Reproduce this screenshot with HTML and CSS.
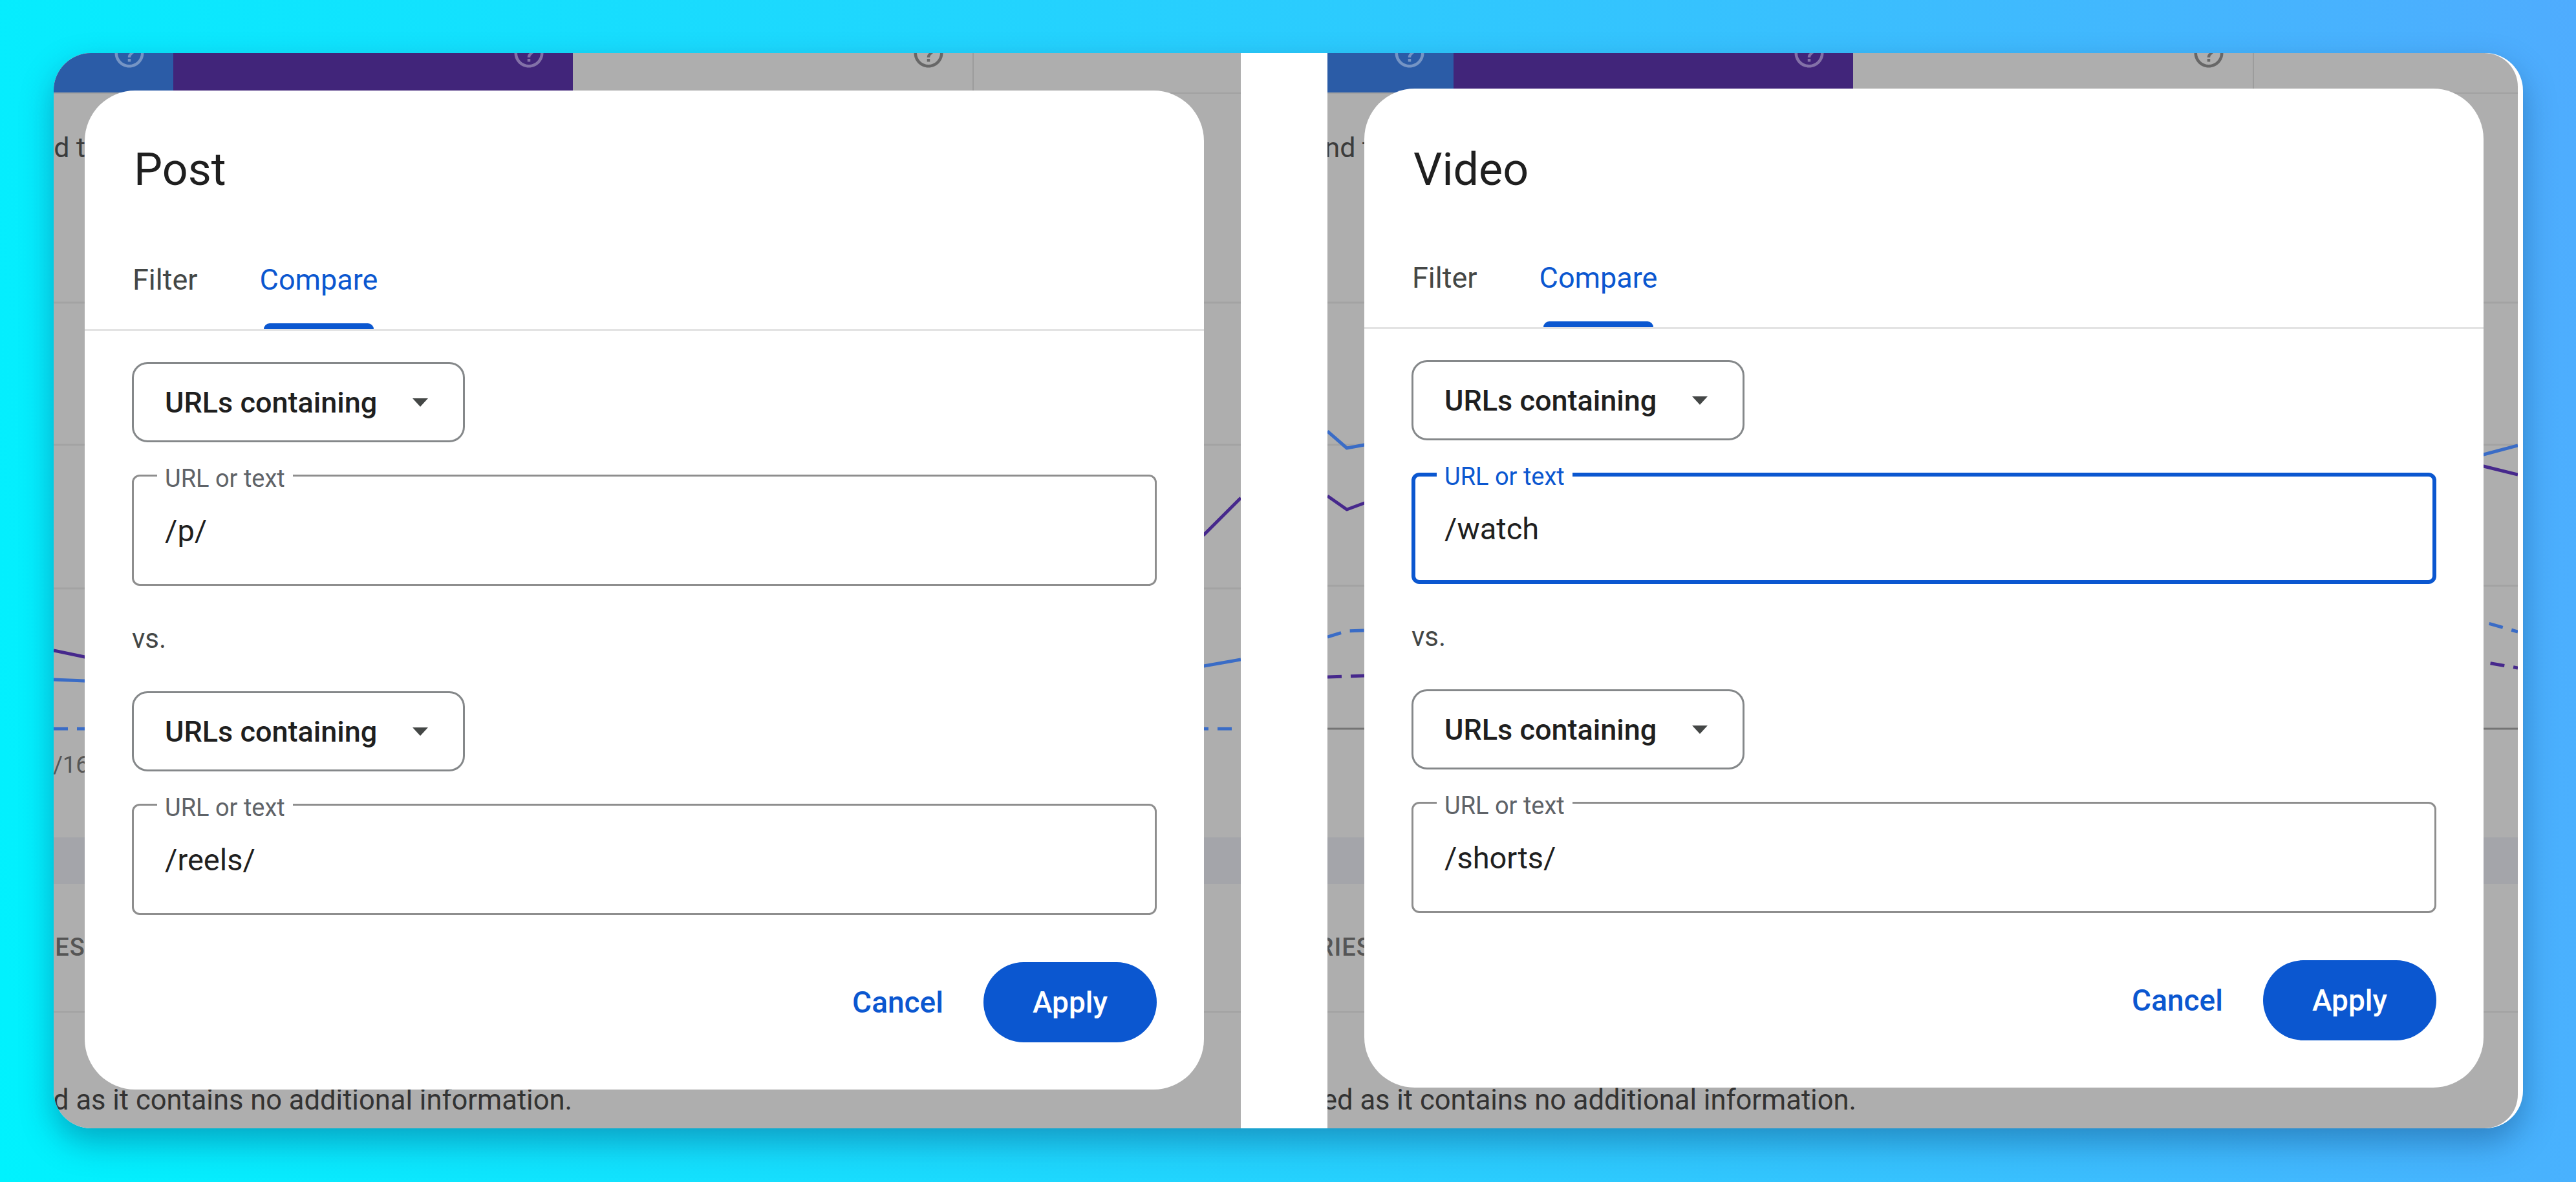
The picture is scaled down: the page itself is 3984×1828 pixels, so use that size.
FILE: index.html
```html
<!DOCTYPE html>
<html lang="en">
<head>
    <meta charset="UTF-8">
    <meta name="viewport" content="width=device-width, initial-scale=1.0">
    <title>Compare URLs</title>
    <link rel="stylesheet" href="styles.css">
</head>
<body>
    <div class="frame">

        <!-- Post pages vs reels -->
        <div class="shot shot-post">
            <div class="page">
                <div class="page-head">
                    <div class="metric metric-clicks">
                        <svg class="help" viewBox="0 0 24 24"><path d="M11 18h2v-2h-2v2zm1-16C6.48 2 2 6.48 2 12s4.48 10 10 10 10-4.48 10-10S17.52 2 12 2zm0 18c-4.41 0-8-3.59-8-8s3.59-8 8-8 8 3.59 8 8-3.59 8-8 8zm0-14c-2.21 0-4 1.79-4 4h2c0-1.1.9-2 2-2s2 .9 2 2c0 2-3 1.75-3 5h2c0-2.25 3-2.5 3-5 0-2.21-1.79-4-4-4z"/></svg>
                    </div>
                    <div class="metric metric-impressions">
                        <svg class="help" viewBox="0 0 24 24"><path d="M11 18h2v-2h-2v2zm1-16C6.48 2 2 6.48 2 12s4.48 10 10 10 10-4.48 10-10S17.52 2 12 2zm0 18c-4.41 0-8-3.59-8-8s3.59-8 8-8 8 3.59 8 8-3.59 8-8 8zm0-14c-2.21 0-4 1.79-4 4h2c0-1.1.9-2 2-2s2 .9 2 2c0 2-3 1.75-3 5h2c0-2.25 3-2.5 3-5 0-2.21-1.79-4-4-4z"/></svg>
                    </div>
                    <div class="metric">
                        <svg class="help" viewBox="0 0 24 24"><path d="M11 18h2v-2h-2v2zm1-16C6.48 2 2 6.48 2 12s4.48 10 10 10 10-4.48 10-10S17.52 2 12 2zm0 18c-4.41 0-8-3.59-8-8s3.59-8 8-8 8 3.59 8 8-3.59 8-8 8zm0-14c-2.21 0-4 1.79-4 4h2c0-1.1.9-2 2-2s2 .9 2 2c0 2-3 1.75-3 5h2c0-2.25 3-2.5 3-5 0-2.21-1.79-4-4-4z"/></svg>
                    </div>
                    <div class="metric metric-split"></div>
                </div>
                <p class="page-note"><span>and the</span></p>
                <svg class="chart" width="1836" height="830" viewBox="0 0 1836 830">
                    <g class="grid">
                        <line x1="0" y1="163" x2="1836" y2="163"/>
                        <line x1="0" y1="383" x2="1836" y2="383"/>
                        <line x1="0" y1="605" x2="1836" y2="605"/>
                    </g>
                    <polyline class="series-a" points="0,701 48,711 400,680 800,640 1200,600 1600,560 1779,522 1836,465"/>
                    <polyline class="series-b" points="0,746 48,748 500,700 1000,760 1500,735 1779,725 1836,715"/>
                    <polyline class="series-b dashed" points="0,822 1836,822"/>
                </svg>
                <div class="chart-axis"><span>4/16</span></div>
                <div class="page-band"></div>
                <div class="table-tabs"><span>QUERIES</span></div>
                <p class="page-foot"><span>This row is not displayed as it contains no additional information.</span></p>
            </div>

            <div class="dialog">
                <h2 class="dialog-title">Post</h2>
                <div class="dialog-tabs">
                    <div class="tab">Filter</div>
                    <div class="tab tab-active">Compare</div>
                </div>
                <div class="dialog-body">
                    <div class="select">URLs containing <span class="caret"></span></div>
                    <div class="field">
                        <span class="field-label">URL or text</span>
                        /p/
                    </div>
                    <div class="vs">vs.</div>
                    <div class="select">URLs containing <span class="caret"></span></div>
                    <div class="field">
                        <span class="field-label">URL or text</span>
                        /reels/
                    </div>
                    <div class="dialog-actions">
                        <button class="btn">Cancel</button>
                        <button class="btn btn-primary">Apply</button>
                    </div>
                </div>
            </div>
        </div>

        <!-- Video: watch vs shorts -->
        <div class="shot shot-video">
            <div class="page">
                <div class="page-head">
                    <div class="metric metric-clicks">
                        <svg class="help" viewBox="0 0 24 24"><path d="M11 18h2v-2h-2v2zm1-16C6.48 2 2 6.48 2 12s4.48 10 10 10 10-4.48 10-10S17.52 2 12 2zm0 18c-4.41 0-8-3.59-8-8s3.59-8 8-8 8 3.59 8 8-3.59 8-8 8zm0-14c-2.21 0-4 1.79-4 4h2c0-1.1.9-2 2-2s2 .9 2 2c0 2-3 1.75-3 5h2c0-2.25 3-2.5 3-5 0-2.21-1.79-4-4-4z"/></svg>
                    </div>
                    <div class="metric metric-impressions">
                        <svg class="help" viewBox="0 0 24 24"><path d="M11 18h2v-2h-2v2zm1-16C6.48 2 2 6.48 2 12s4.48 10 10 10 10-4.48 10-10S17.52 2 12 2zm0 18c-4.41 0-8-3.59-8-8s3.59-8 8-8 8 3.59 8 8-3.59 8-8 8zm0-14c-2.21 0-4 1.79-4 4h2c0-1.1.9-2 2-2s2 .9 2 2c0 2-3 1.75-3 5h2c0-2.25 3-2.5 3-5 0-2.21-1.79-4-4-4z"/></svg>
                    </div>
                    <div class="metric">
                        <svg class="help" viewBox="0 0 24 24"><path d="M11 18h2v-2h-2v2zm1-16C6.48 2 2 6.48 2 12s4.48 10 10 10 10-4.48 10-10S17.52 2 12 2zm0 18c-4.41 0-8-3.59-8-8s3.59-8 8-8 8 3.59 8 8-3.59 8-8 8zm0-14c-2.21 0-4 1.79-4 4h2c0-1.1.9-2 2-2s2 .9 2 2c0 2-3 1.75-3 5h2c0-2.25 3-2.5 3-5 0-2.21-1.79-4-4-4z"/></svg>
                    </div>
                    <div class="metric metric-split"></div>
                </div>
                <p class="page-note"><span>and the</span></p>
                <svg class="chart" width="1841" height="830" viewBox="0 0 1841 830">
                    <g class="grid">
                        <line x1="0" y1="163" x2="1841" y2="163"/>
                        <line x1="0" y1="383" x2="1841" y2="383"/>
                        <line x1="0" y1="601" x2="1841" y2="601"/>
                        <line class="axis" x1="0" y1="822" x2="1841" y2="822"/>
                    </g>
                    <polyline class="series-b" points="0,362 30,388 57,383 500,340 1000,420 1500,380 1788,398 1841,384"/>
                    <polyline class="series-a" points="0,462 30,483 57,473 500,450 1000,500 1500,440 1788,416 1841,429"/>
                    <polyline class="series-b dashed" points="0,680 30,671 57,670 600,690 1200,650 1788,657 1841,672"/>
                    <polyline class="series-a dashed" points="0,742 57,740 600,760 1200,730 1788,719 1841,728"/>
                </svg>
                <div class="chart-axis"></div>
                <div class="page-band"></div>
                <div class="table-tabs"><span>QUERIES</span></div>
                <p class="page-foot"><span>This row is not displayed as it contains no additional information.</span></p>
            </div>

            <div class="dialog">
                <h2 class="dialog-title">Video</h2>
                <div class="dialog-tabs">
                    <div class="tab">Filter</div>
                    <div class="tab tab-active">Compare</div>
                </div>
                <div class="dialog-body">
                    <div class="select">URLs containing <span class="caret"></span></div>
                    <div class="field field-focused">
                        <span class="field-label">URL or text</span>
                        /watch
                    </div>
                    <div class="vs">vs.</div>
                    <div class="select">URLs containing <span class="caret"></span></div>
                    <div class="field">
                        <span class="field-label">URL or text</span>
                        /shorts/
                    </div>
                    <div class="dialog-actions">
                        <button class="btn">Cancel</button>
                        <button class="btn btn-primary">Apply</button>
                    </div>
                </div>
            </div>
        </div>

    </div>
</body>
</html>
```

FILE: styles.css
```css
body {
    margin: 0;
    height: 1828px;
    padding: 82px 82px 0 83px;
    box-sizing: border-box;
    background: linear-gradient(80deg, #00f2fe, #4facfe);
    font-family: Roboto, "Liberation Sans", sans-serif;
}
.frame {
    display: flex;
    gap: 134px;
    width: 3819px;
    height: 1663px;
    padding-right: 8px;
    box-sizing: border-box;
    background: #fff;
    border-radius: 58px;
    overflow: hidden;
    box-shadow: 0 22px 50px rgba(0, 40, 90, 0.35);
}

/* screenshot of the page behind the modal */
.shot {
    position: relative;
    flex: none;
    height: 100%;
    background: #aeaeae;
    overflow: hidden;
}
.shot-post {
    width: 1836px;
}
.shot-video {
    width: 1841px;
    border-radius: 0 52px 52px 0;
}
.page {
    color: #3c3c3c;
}
.page-head {
    display: flex;
    height: 61px;
    margin-left: -433px;
    border-bottom: 2px solid #a2a2a2;
}
.shot-video .page-head {
    margin-left: -423px;
}
.metric {
    flex: none;
    width: 618px;
    display: flex;
    justify-content: flex-end;
    align-items: flex-start;
}
.metric-clicks {
    background: #2b5ca7;
}
.metric-impressions {
    background: #41257a;
}
.metric-split {
    border-left: 2px solid #9c9c9c;
}
.help {
    width: 54px;
    height: 54px;
    margin: -27px 41px 0 0;
    fill: #676767;
}
.metric-clicks .help,
.metric-impressions .help {
    fill: rgba(255, 255, 255, 0.35);
}
.page-note {
    height: 160px;
    margin: 0;
    padding-top: 58px;
    box-sizing: border-box;
    font-size: 43px;
    line-height: 50px;
    white-space: nowrap;
}
.page-note span {
    margin-left: -47px;
}
.shot-video .page-note span {
    margin-left: -28px;
}
.chart {
    display: block;
}
.grid line {
    stroke: #a3a3a3;
    stroke-width: 3;
}
.grid .axis {
    stroke: #747474;
}
.series-a,
.series-b {
    fill: none;
    stroke-width: 5;
    stroke-linejoin: round;
}
.series-a {
    stroke: #46288c;
}
.series-b {
    stroke: #3a6cc6;
}
.dashed {
    stroke-dasharray: 22 14;
}
.chart-axis {
    height: 160px;
    padding-top: 26px;
    box-sizing: border-box;
    font-size: 36px;
    line-height: 44px;
    color: #555;
}
.chart-axis span {
    margin-left: -21px;
}
.page-band {
    height: 72px;
    background: #a4a5aa;
}
.table-tabs {
    height: 197px;
    line-height: 197px;
    border-bottom: 2px solid #a2a2a2;
    font-size: 38px;
    font-weight: 500;
    letter-spacing: 1px;
    color: #555;
    white-space: nowrap;
}
.table-tabs span {
    margin-left: -110px;
}
.shot-video .table-tabs span {
    margin-left: -90px;
}
.page-foot {
    display: flex;
    justify-content: flex-end;
    width: 802px;
    margin: 0;
    padding-top: 111px;
    font-size: 43.5px;
    line-height: 50px;
    white-space: nowrap;
    color: #333;
}
.shot-video .page-foot {
    width: 818px;
}

/* compare dialog */
.dialog {
    position: absolute;
    left: 48px;
    top: 58px;
    width: 1731px;
    background: #fff;
    border-radius: 78px;
}
.shot-video .dialog {
    left: 57px;
    top: 55px;
}
.dialog-title {
    margin: 0;
    padding: 74px 76px 0;
    font-size: 70px;
    font-weight: 400;
    line-height: 96px;
    color: #1f1f1f;
}
.shot-video .dialog-title {
    padding-top: 77px;
}
.dialog-tabs {
    display: flex;
    margin-top: 55px;
    padding-left: 26px;
    border-bottom: 3px solid #e3e3e3;
}
.shot-video .dialog-tabs {
    margin-top: 52px;
}
.tab {
    position: relative;
    padding: 0 48px 8px;
    font-size: 45px;
    line-height: 136px;
    color: #444746;
}
.tab-active {
    color: #0b57d0;
}
.tab-active::after {
    content: "";
    position: absolute;
    left: 54px;
    right: 54px;
    bottom: 0;
    height: 9px;
    background: #0b57d0;
    border-radius: 9px 9px 0 0;
}
.dialog-body {
    padding: 48px 73px 73px;
}
.select {
    display: flex;
    align-items: center;
    justify-content: space-between;
    width: 515px;
    height: 124px;
    padding: 0 54px 0 48px;
    box-sizing: border-box;
    border: 3px solid #85888a;
    border-radius: 24px;
    font-size: 45px;
    font-weight: 500;
    color: #1f1f1f;
}
.caret {
    border-left: 12px solid transparent;
    border-right: 12px solid transparent;
    border-top: 13px solid #444746;
}
.field {
    position: relative;
    display: flex;
    align-items: center;
    height: 172px;
    margin-top: 50px;
    padding-left: 48px;
    box-sizing: border-box;
    border: 3px solid #8e8e8e;
    border-radius: 12px;
    font-size: 47px;
    color: #1f1f1f;
}
.field-label {
    position: absolute;
    left: 36px;
    top: -18px;
    padding: 0 12px;
    background: #fff;
    font-size: 38px;
    line-height: 42px;
    color: #5f6368;
}
.field-focused {
    border: 6px solid #0b57d0;
    padding-left: 45px;
}
.field-focused .field-label {
    left: 33px;
    top: -21px;
    color: #0b57d0;
}
.vs {
    margin: 57px 0 56px;
    font-size: 42px;
    line-height: 50px;
    color: #444746;
}
.dialog-actions {
    display: flex;
    justify-content: flex-end;
    align-items: center;
    gap: 26px;
    margin-top: 73px;
}
.btn {
    height: 124px;
    padding: 0 36px;
    border: none;
    border-radius: 62px;
    background: none;
    font-family: inherit;
    font-size: 46px;
    font-weight: 500;
    color: #0b57d0;
    cursor: pointer;
}
.btn-primary {
    padding: 0 76px;
    background: #0b57d0;
    color: #fff;
}
```
